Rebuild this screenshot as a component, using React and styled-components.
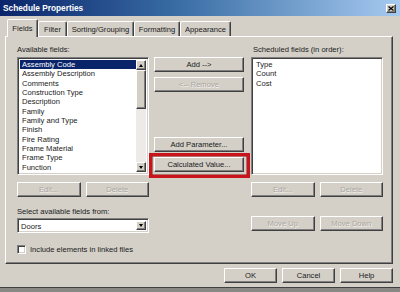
import React from 'react';
import styled, { createGlobalStyle, css } from 'styled-components';

const FACE = '#D4D0C8';
const FS = '7.6px';

const Global = createGlobalStyle`
  html, body { margin: 0; padding: 0; background: ${FACE}; }
  body {
    width: 400px; height: 292px; overflow: hidden;
    font-family: "Liberation Sans", Arial, sans-serif;
    font-size: ${FS};
    color: #1a1a1a;
  }
`;

const raised = css`
  border: 1px solid;
  border-color: #ffffff #404040 #404040 #ffffff;
  box-shadow: inset -1px -1px 0 #808080;
`;

const sunken = css`
  border: 1px solid;
  border-color: #808080 #ffffff #ffffff #808080;
  box-shadow: inset 1px 1px 0 #404040, inset -1px -1px 0 ${FACE};
`;

const Window = styled.div`
  width: 400px;
  height: 292px;
  box-sizing: border-box;
  display: flex;
  flex-direction: column;
  background: ${FACE};
  box-shadow: inset 0 -4px 0 #8a8884, inset 0 -5px 0 #404040;
`;

const TitleBar = styled.div`
  flex: none;
  height: 16px;
  display: flex;
  align-items: center;
  justify-content: space-between;
  padding: 0 4px 0 3px;
  background: linear-gradient(to right, #0A246A 0%, #3A6EA5 45%, #A6CAF0 100%);
`;

const Title = styled.span`
  color: #fff;
  font-weight: bold;
  font-size: 8.3px;
`;

const CloseBtn = styled.div`
  width: 10px;
  height: 9px;
  box-sizing: border-box;
  ${raised};
  background: ${FACE};
  display: flex;
  align-items: center;
  justify-content: center;
`;

const Body = styled.div`
  display: flex;
  flex-direction: column;
  padding: 3px 7px 0 5px;
`;

const Tabs = styled.div`
  display: flex;
  align-items: flex-end;
  height: 17px;
  padding-left: 2px;
  position: relative;
  z-index: 1;
`;

const Tab = styled.div`
  width: ${p => p.$w}px;
  height: ${p => (p.$active ? 18 : 15)}px;
  margin-bottom: ${p => (p.$active ? -1 : 0)}px;
  box-sizing: border-box;
  background: ${FACE};
  border-top: 1px solid #fff;
  border-left: 1px solid #fff;
  border-right: 1px solid #404040;
  border-radius: 2px 2px 0 0;
  box-shadow: inset -1px 0 0 #808080;
  display: flex;
  align-items: center;
  justify-content: center;
  padding-bottom: ${p => (p.$active ? 1 : 0)}px;
  white-space: nowrap;
`;

const Panel = styled.div`
  height: 228px;
  box-sizing: border-box;
  ${raised};
  display: flex;
  padding: 8px 0 0 11px;
`;

const Column = styled.div`
  display: flex;
  flex-direction: column;
  width: ${p => p.$w}px;
  margin-left: ${p => p.$ml || 0}px;
  padding-top: ${p => p.$pt || 0}px;
`;

const Label = styled.div`
  height: 10px;
  line-height: 10px;
  margin-top: ${p => p.$mt || 0}px;
  margin-bottom: ${p => (p.$mb === undefined ? 2 : p.$mb)}px;
  padding-left: ${p => p.$pl || 0}px;
  white-space: nowrap;
`;

const ListBox = styled.div`
  height: 118px;
  box-sizing: border-box;
  ${sunken};
  background: #fff;
  display: flex;
  padding: 2px;
  overflow: hidden;
`;

const Items = styled.div`
  flex: 1;
  overflow: hidden;
`;

const Item = styled.div`
  height: 9.33px;
  line-height: 9.33px;
  padding-left: 2px;
  white-space: nowrap;
  background: ${p => (p.$sel ? '#0A246A' : 'transparent')};
  color: ${p => (p.$sel ? '#fff' : '#1a1a1a')};
`;

const ScrollBar = styled.div`
  width: 10px;
  display: flex;
  flex-direction: column;
`;

const ScrollBtn = styled.div`
  height: ${p => p.$h || 10}px;
  box-sizing: border-box;
  ${raised};
  background: ${FACE};
  display: flex;
  align-items: center;
  justify-content: center;
  flex: none;
`;

const Track = styled.div`
  flex: 1;
  background: #EDEBE7;
`;

const Arrow = styled.div`
  width: 0;
  height: 0;
  border-left: 2.5px solid transparent;
  border-right: 2.5px solid transparent;
  ${p => (p.$up ? 'border-bottom: 3px solid #000;' : 'border-top: 3px solid #000;')}
`;

const Button = styled.button`
  height: 15px;
  box-sizing: border-box;
  ${raised};
  background: ${FACE};
  padding: 0;
  margin: 0;
  font-family: inherit;
  font-size: ${FS};
  color: ${p => (p.$disabled ? '#A9A59E' : '#1a1a1a')};
  text-shadow: ${p => (p.$disabled ? '0.6px 0.6px 0 #F4F3F0' : 'none')};
  display: flex;
  align-items: center;
  justify-content: center;
  width: ${p => (p.$w ? `${p.$w}px` : '100%')};
  margin-top: ${p => p.$mt || 0}px;
  white-space: nowrap;
`;

const Pair = styled.div`
  display: grid;
  grid-template-columns: 1fr 1fr;
  column-gap: 5px;
  margin-top: ${p => p.$mt || 0}px;
`;

const Highlight = styled.div`
  position: relative;
  margin-top: 5px;
  &::after {
    content: '';
    position: absolute;
    top: -4px;
    left: -5px;
    right: -6px;
    bottom: -6px;
    border: 3px solid #C8151C;
    box-shadow: inset 0 0 0 0.5px #8E0E12;
    pointer-events: none;
  }
`;

const Dropdown = styled.div`
  height: 15px;
  box-sizing: border-box;
  ${sunken};
  background: #fff;
  display: flex;
  align-items: stretch;
  padding: 2px;
`;

const DropText = styled.div`
  flex: 1;
  line-height: 11px;
  padding-left: 1px;
`;

const DropBtn = styled.div`
  width: 10px;
  box-sizing: border-box;
  ${raised};
  background: ${FACE};
  display: flex;
  align-items: center;
  justify-content: center;
`;

const CheckRow = styled.div`
  display: flex;
  align-items: center;
  gap: 4px;
  margin-top: 11px;
  height: 10px;
`;

const CheckBox = styled.div`
  width: 9px;
  height: 9px;
  box-sizing: border-box;
  ${sunken};
  background: #fff;
`;

const Footer = styled.div`
  display: flex;
  justify-content: flex-end;
  gap: 5px;
  margin-top: 4px;
`;

const availableFields = [
  'Assembly Code',
  'Assembly Description',
  'Comments',
  'Construction Type',
  'Description',
  'Family',
  'Family and Type',
  'Finish',
  'Fire Rating',
  'Frame Material',
  'Frame Type',
  'Function',
  'Head Height',
];

const scheduled = ['Type', 'Count', 'Cost'];

const tabs = [
  { label: 'Fields', w: 31, active: true },
  { label: 'Filter', w: 29 },
  { label: 'Sorting/Grouping', w: 67 },
  { label: 'Formatting', w: 46 },
  { label: 'Appearance', w: 51 },
];

export default function App() {
  return (
    <>
      <Global />
      <Window>
        <TitleBar>
          <Title>Schedule Properties</Title>
          <CloseBtn>
            <svg width="6" height="5" viewBox="0 0 6 5">
              <path d="M0.5 0.5 L5.5 4.5 M5.5 0.5 L0.5 4.5" stroke="#000" strokeWidth="1.2" />
            </svg>
          </CloseBtn>
        </TitleBar>
        <Body>
          <Tabs>
            {tabs.map(t => (
              <Tab key={t.label} $w={t.w} $active={t.active}>
                {t.label}
              </Tab>
            ))}
          </Tabs>
          <Panel>
            <Column $w={132}>
              <Label>Available fields:</Label>
              <ListBox>
                <Items>
                  {availableFields.map((f, i) => (
                    <Item key={f} $sel={i === 0}>
                      {f}
                    </Item>
                  ))}
                </Items>
                <ScrollBar>
                  <ScrollBtn>
                    <Arrow $up />
                  </ScrollBtn>
                  <ScrollBtn $h={39} />
                  <Track />
                  <ScrollBtn>
                    <Arrow />
                  </ScrollBtn>
                </ScrollBar>
              </ListBox>
              <Pair $mt={7}>
                <Button $disabled>Edit...</Button>
                <Button $disabled>Delete</Button>
              </Pair>
              <Label $mt={10} $mb={1}>
                Select available fields from:
              </Label>
              <Dropdown>
                <DropText>Doors</DropText>
                <DropBtn>
                  <Arrow />
                </DropBtn>
              </Dropdown>
              <CheckRow>
                <CheckBox />
                <span>Include elements in linked files</span>
              </CheckRow>
            </Column>
            <Column $w={90} $ml={5} $pt={12}>
              <Button>Add --&gt;</Button>
              <Button $disabled $mt={5}>
                &lt;-- Remove
              </Button>
              <Button $mt={45}>Add Parameter...</Button>
              <Highlight>
                <Button>Calculated Value...</Button>
              </Highlight>
            </Column>
            <Column $w={132} $ml={7}>
              <Label $pl={2}>Scheduled fields (in order):</Label>
              <ListBox>
                <Items>
                  {scheduled.map(f => (
                    <Item key={f}>{f}</Item>
                  ))}
                </Items>
              </ListBox>
              <Pair $mt={7}>
                <Button $disabled>Edit...</Button>
                <Button $disabled>Delete</Button>
              </Pair>
              <Pair $mt={19}>
                <Button $disabled>Move Up</Button>
                <Button $disabled>Move Down</Button>
              </Pair>
            </Column>
          </Panel>
          <Footer>
            <Button $w={53}>OK</Button>
            <Button $w={53}>Cancel</Button>
            <Button $w={53}>Help</Button>
          </Footer>
        </Body>
      </Window>
    </>
  );
}
